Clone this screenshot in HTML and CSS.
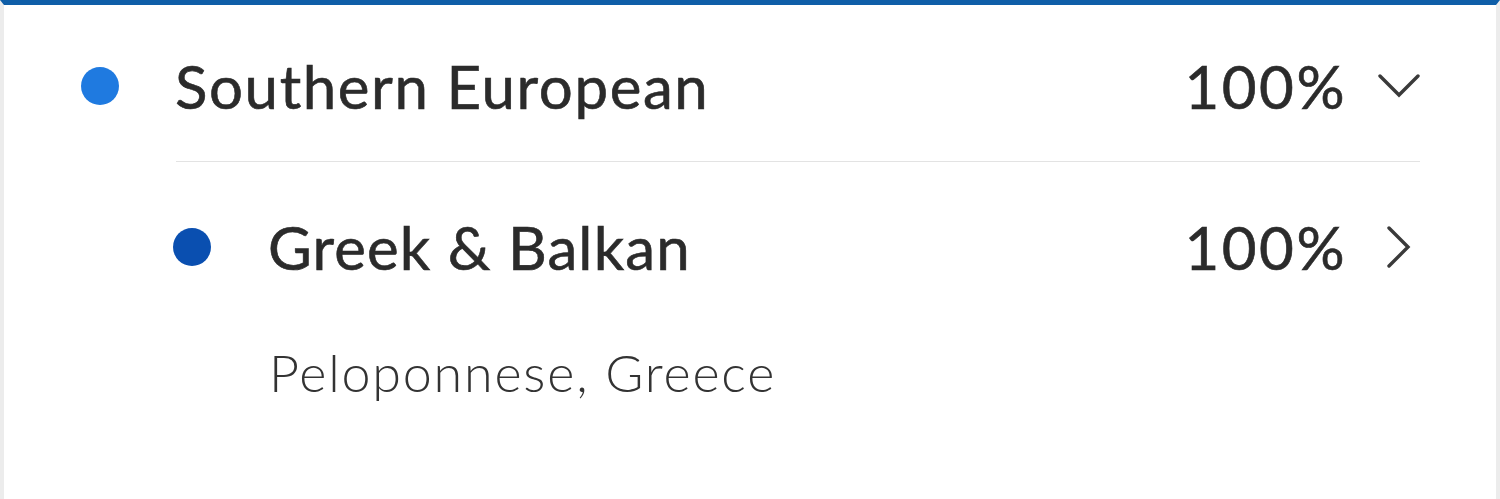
FILE: index.html
```html
<!DOCTYPE html>
<html lang="en">
<head>
<meta charset="utf-8">
<title>Ancestry breakdown</title>
<link rel="stylesheet" href="styles.css">
</head>
<body>
<section class="card">
  <div class="region">
    <span class="dot dot-region"></span>
    <span class="name">Southern European</span>
    <span class="pct">100%</span>
    <svg class="chev chev-down" viewBox="0 0 42 24" aria-hidden="true"><path d="M2 2 L21 21 L40 2"/></svg>
  </div>
  <div class="sub-list">
    <div class="sub">
      <span class="dot dot-sub"></span>
      <span class="name">Greek &amp; Balkan</span>
      <span class="pct">100%</span>
      <svg class="chev chev-right" viewBox="0 0 24 42" aria-hidden="true"><path d="M2 2 L21 21 L2 40"/></svg>
    </div>
    <p class="place">Peloponnese, Greece</p>
  </div>
</section>
</body>
</html>
```
FILE: styles.css
```css
html, body {
  margin: 0;
  padding: 0;
  background: #ffffff;
}

body {
  font-family: "Lato", "Open Sans", sans-serif;
  color: #2b2b2b;
}

.card {
  box-sizing: border-box;
  height: 499px;
  border-top: 5px solid #0f5ea8;
  border-left: 4px solid #ececec;
  border-right: 4px solid #ececec;
  background: #ffffff;
}

.region {
  display: flex;
  align-items: center;
  box-sizing: border-box;
  height: 161px;
  padding: 10px 76px 0 77px;
  margin-top: -5px;
}

.dot {
  flex: none;
  width: 38px;
  height: 38px;
  border-radius: 50%;
}

.dot-region { background: #1f7ae0; }
.dot-sub { background: #0a4fb0; margin-left: -3px; }

.name {
  flex: 1;
  font-size: 60px;
  font-weight: 400;
  letter-spacing: 1.6px;
  -webkit-text-stroke: 0.6px #2b2b2b;
}

.region .name { margin-left: 56px; }

.sub .name {
  margin-left: 57px;
  letter-spacing: 1.1px;
}

.pct {
  font-size: 60px;
  font-weight: 400;
  letter-spacing: 2.5px;
  -webkit-text-stroke: 0.6px #2b2b2b;
}

.chev {
  flex: none;
  fill: none;
  stroke: #3a3a3a;
  stroke-width: 3.4;
  stroke-linecap: round;
  stroke-linejoin: miter;
}

.chev-down {
  width: 42px;
  height: 24px;
  margin-left: 31px;
}

.chev-right {
  width: 24px;
  height: 42px;
  margin-left: 40px;
  margin-right: 9px;
}

.sub-list {
  margin-left: 172px;
  margin-right: 76px;
  border-top: 1px solid #e3e3e3;
}

.sub {
  display: flex;
  align-items: center;
  height: 170px;
}

.place {
  margin: 9px 0 0 93px;
  font-size: 52px;
  font-weight: 300;
  color: #333333;
  letter-spacing: 1.8px;
}
```
